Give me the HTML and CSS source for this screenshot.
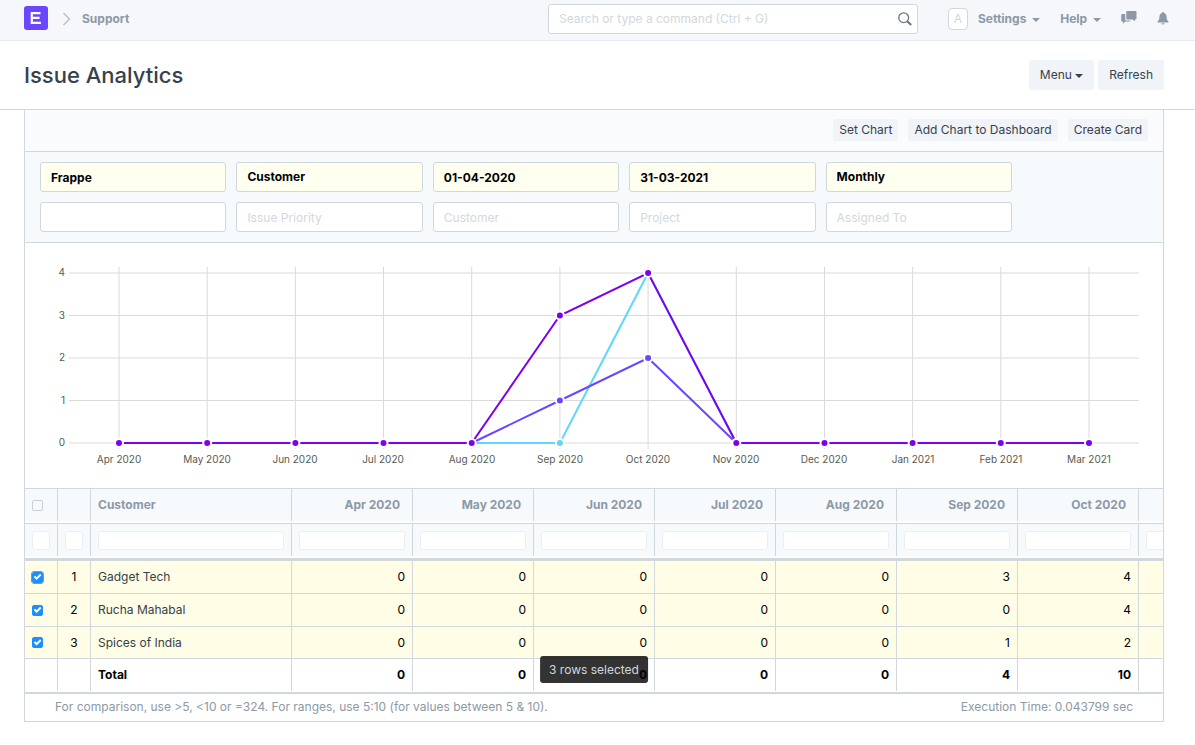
FILE: index.html
```html
<!DOCTYPE html>
<html lang="en">
<head>
<meta charset="utf-8">
<meta name="viewport" content="width=device-width, initial-scale=1">
<title>Issue Analytics</title>
<link rel="stylesheet" href="styles.css">
</head>
<body>
<header class="navbar">
  <a class="logo" href="#" aria-label="Home">
    <svg width="24" height="24" viewBox="0 0 24 24" aria-hidden="true"><rect width="24" height="24" rx="3" fill="#6b46ff"/><path d="M16.500 7.200H7.800V16.800H16.900M7.800 11.900H15.600" fill="none" stroke="#fff" stroke-width="2.200"/></svg>
  </a>
  <svg class="chevron" width="10" height="16" viewBox="0 0 10 16" aria-hidden="true"><path d="M1.500 2l6 6-6 6" fill="none" stroke="#b8c2cc" stroke-width="1.500"/></svg>
  <a class="crumb" href="#">Support</a>
  <div class="search">
    <input type="text" aria-label="Search" placeholder="Search or type a command (Ctrl + G)">
    <svg width="14" height="14" viewBox="0 0 14 14" aria-hidden="true"><circle cx="5.700" cy="5.700" r="4.900" fill="none" stroke="#6c7680" stroke-width="1.300"/><path d="M9.200 9.200l4 3.800" stroke="#6c7680" stroke-width="2"/></svg>
  </div>
  <nav class="nav">
    <a class="avatar" href="#">A</a>
    <button class="nav-link settings" type="button">Settings <span class="caret"></span></button>
    <button class="nav-link help" type="button">Help <span class="caret"></span></button>
    <button class="nav-icon" type="button" aria-label="Chat"><svg width="16" height="14" viewBox="0 0 16 14" aria-hidden="true"><path d="M6.300 0h8.200a1 1 0 0 1 1 1v6.500a1 1 0 0 1-1 1h-.7v2.100l-2.200-2.100H6.300a1 1 0 0 1-1-1V1a1 1 0 0 1 1-1z" fill="#8d99a6"/><path d="M4.300 3H1.200a1 1 0 0 0-1 1v5.500a1 1 0 0 0 1 1h.7v2.300l2.300-2.300h4.200a1 1 0 0 0 1-1H5.500a1.200 1.200 0 0 1-1.200-1.200z" fill="#8d99a6"/></svg></button>
    <button class="nav-icon bell" type="button" aria-label="Notifications"><svg width="12" height="13" viewBox="0 0 12 13" aria-hidden="true"><path d="M6 0a1 1 0 0 0-1 1C3.200 1.500 2.500 3 2.400 5 2.300 7.500 1.800 8.500.5 9.700V10.500h11v-.8C10.200 8.500 9.700 7.500 9.600 5 9.500 3 8.800 1.500 7 1a1 1 0 0 0-1-1zM4.500 11.200h3a1.500 1.200 0 0 1-3 0z" fill="#8d99a6"/></svg></button>
  </nav>
</header>

<div class="page-head">
  <h1>Issue Analytics</h1>
  <div class="actions">
    <button class="btn" type="button">Menu <span class="caret"></span></button>
    <button class="btn" type="button">Refresh</button>
  </div>
</div>

<main class="report">
  <div class="toolbar">
    <button class="btn-small" type="button">Set Chart</button>
    <button class="btn-small" type="button">Add Chart to Dashboard</button>
    <button class="btn-small" type="button">Create Card</button>
  </div>

  <form class="filters">
    <input class="field required" type="text" aria-label="Company" value="Frappe">
    <select class="field required" aria-label="Based On"><option>Customer</option></select>
    <input class="field required" type="text" aria-label="From Date" value="01-04-2020">
    <input class="field required" type="text" aria-label="To Date" value="31-03-2021">
    <select class="field required" aria-label="Range"><option>Monthly</option></select>
    <input class="field" type="text" aria-label="Status">
    <input class="field" type="text" aria-label="Issue Priority" placeholder="Issue Priority">
    <input class="field" type="text" aria-label="Customer" placeholder="Customer">
    <input class="field" type="text" aria-label="Project" placeholder="Project">
    <input class="field" type="text" aria-label="Assigned To" placeholder="Assigned To">
  </form>

  <svg class="chart" viewBox="0 0 1138 245" role="img" aria-label="Issues per month">
    <path class="grid" d="M44 30H1114M44 72.500H1114M44 115H1114M44 157.500H1114M44 200H1114M94 24V206M182.200 24V206M270.400 24V206M358.500 24V206M446.700 24V206M534.900 24V206M623.100 24V206M711.300 24V206M799.500 24V206M887.600 24V206M975.800 24V206M1064 24V206"/>
    <g class="y-labels">
      <text x="40" y="33">4</text><text x="40" y="76">3</text><text x="40" y="118">2</text><text x="40" y="161">1</text><text x="40" y="203">0</text>
    </g>
    <g class="x-labels">
      <text x="94" y="220">Apr 2020</text><text x="182" y="220">May 2020</text><text x="270" y="220">Jun 2020</text><text x="358" y="220">Jul 2020</text><text x="447" y="220">Aug 2020</text><text x="535" y="220">Sep 2020</text><text x="623" y="220">Oct 2020</text><text x="711" y="220">Nov 2020</text><text x="799" y="220">Dec 2020</text><text x="888" y="220">Jan 2021</text><text x="976" y="220">Feb 2021</text><text x="1064" y="220">Mar 2021</text>
    </g>
    <g class="lines">
      <path class="cyan" d="M446.700 200H534.900L623.100 30L711.300 200"/>
      <path class="indigo" d="M446.700 200L534.900 157.500L623.100 115L711.300 200"/>
      <path class="purple" d="M94 200H446.700L534.900 72.500L623.100 30L711.300 200H1064"/>
    </g>
    <g class="dots">
      <circle class="cyan" cx="534.900" cy="200" r="4"/>
      <circle class="indigo" cx="534.900" cy="157.500" r="4"/><circle class="indigo" cx="623.100" cy="115" r="4"/>
      <circle class="purple" cx="94" cy="200" r="4"/><circle class="purple" cx="182.200" cy="200" r="4"/><circle class="purple" cx="270.400" cy="200" r="4"/><circle class="purple" cx="358.500" cy="200" r="4"/><circle class="purple" cx="446.700" cy="200" r="4"/><circle class="purple" cx="534.900" cy="72.500" r="4"/><circle class="purple" cx="623.100" cy="30" r="4"/><circle class="purple" cx="711.300" cy="200" r="4"/><circle class="purple" cx="799.500" cy="200" r="4"/><circle class="purple" cx="887.600" cy="200" r="4"/><circle class="purple" cx="975.800" cy="200" r="4"/><circle class="purple" cx="1064" cy="200" r="4"/>
    </g>
  </svg>

  <div class="datatable">
    <table>
      <colgroup><col class="c-tick"><col class="c-tick"><col class="c-name"><col class="c-num"><col class="c-num"><col class="c-num"><col class="c-num"><col class="c-num"><col class="c-num"><col class="c-num"><col class="c-num"></colgroup>
      <thead>
        <tr class="titles"><th><input type="checkbox" aria-label="Select all rows"></th><th></th><th class="name">Customer</th><th>Apr 2020</th><th>May 2020</th><th>Jun 2020</th><th>Jul 2020</th><th>Aug 2020</th><th>Sep 2020</th><th>Oct 2020</th><th></th></tr>
        <tr class="gap"><td colspan="11"></td></tr>
        <tr class="search-row"><td><input type="text" aria-label="Filter selection"></td><td><input type="text" aria-label="Filter row number"></td><td><input type="text" aria-label="Filter Customer"></td><td><input type="text" aria-label="Filter Apr 2020"></td><td><input type="text" aria-label="Filter May 2020"></td><td><input type="text" aria-label="Filter Jun 2020"></td><td><input type="text" aria-label="Filter Jul 2020"></td><td><input type="text" aria-label="Filter Aug 2020"></td><td><input type="text" aria-label="Filter Sep 2020"></td><td><input type="text" aria-label="Filter Oct 2020"></td><td><input type="text" aria-label="Filter Nov 2020"></td></tr>
        <tr class="gap thick"><td colspan="11"></td></tr>
      </thead>
      <tbody>
        <tr><td><input class="focused" type="checkbox" checked aria-label="Select row 1"></td><td class="index">1</td><td class="name">Gadget Tech</td><td>0</td><td>0</td><td>0</td><td>0</td><td>0</td><td>3</td><td>4</td><td></td></tr>
        <tr><td><input type="checkbox" checked aria-label="Select row 2"></td><td class="index">2</td><td class="name">Rucha Mahabal</td><td>0</td><td>0</td><td>0</td><td>0</td><td>0</td><td>0</td><td>4</td><td></td></tr>
        <tr><td><input type="checkbox" checked aria-label="Select row 3"></td><td class="index">3</td><td class="name">Spices of India</td><td>0</td><td>0</td><td>0</td><td>0</td><td>0</td><td>1</td><td>2</td><td></td></tr>
      </tbody>
      <tfoot>
        <tr><td></td><td></td><td class="name">Total</td><td>0</td><td>0</td><td>0</td><td>0</td><td>0</td><td>4</td><td>10</td><td></td></tr>
        <tr class="end"><td colspan="11"></td></tr>
      </tfoot>
    </table>
    <div class="toast" role="status">3 rows selected</div>
  </div>

  <footer class="report-foot">
    <span>For comparison, use &gt;5, &lt;10 or =324. For ranges, use 5:10 (for values between 5 &amp; 10).</span>
    <span>Execution Time: 0.043799 sec</span>
  </footer>
</main>
</body>
</html>
```
FILE: styles.css
```css
* { box-sizing: border-box; }

body {
  margin: 0;
  background: #fff;
  color: #36414c;
  font: 12px/18px Inter, "Liberation Sans", sans-serif;
}

button, input, select { font: inherit; color: inherit; margin: 0; }
button { border: 0; cursor: pointer; }
a { text-decoration: none; color: inherit; }

.caret {
  display: inline-block;
  vertical-align: middle;
  border: 4px solid transparent;
  border-top-color: currentColor;
  border-bottom: 0;
}

/* Top bar */
.navbar {
  display: flex;
  align-items: center;
  padding: 4px 24px 6px;
  background: #f5f7fa;
  border-bottom: 1px solid #e6eaef;
  color: #8d99a6;
  font-weight: 700;
}
.logo { height: 24px; margin-bottom: 2px; }
.chevron { margin: 0 10px 0 14px; }
.search {
  display: flex;
  align-items: center;
  width: 370px;
  height: 30px;
  margin-left: auto;
  padding: 0 5px 0 10px;
  background: #fff;
  border: 1px solid #d1d8dd;
  border-radius: 3px;
}
.search input {
  flex: 1;
  min-width: 0;
  padding: 0;
  border: 0;
  outline: 0;
  background: none;
  color: #36414c;
  font-weight: 400;
}
::placeholder { color: #d1d8dd; opacity: 1; }
.nav { display: flex; align-items: center; margin-left: 30px; }
.avatar {
  width: 20px;
  height: 22px;
  border: 1px solid #d1d8dd;
  border-radius: 4px;
  background: #fff;
  color: #d1d8dd;
  font-weight: 400;
  line-height: 20px;
  text-align: center;
}
.nav-link { padding: 0; margin-left: 10px; background: none; font-weight: 700; }
.nav-link .caret { margin-left: 3px; }
.help { margin-left: 20px; }
.nav-icon { display: flex; padding: 0; margin: 0 0 2px 20px; background: none; }
.bell { margin-right: 2px; }

/* Page title */
.page-head {
  display: flex;
  align-items: center;
  justify-content: space-between;
  padding: 19px 31px 19px 24px;
  border-bottom: 1px solid #d1d8dd;
}
h1 { margin: 0; font-size: 22px; line-height: 30px; font-weight: 500; }
.actions { display: flex; gap: 4px; }
.btn {
  height: 30px;
  padding: 0 11px;
  border-radius: 3px;
  background: #f0f3f8;
}

/* Report frame */
.report {
  margin: 0 31px 0 24px;
  border: 1px solid #d1d8dd;
  border-top: 0;
}
.toolbar {
  display: flex;
  justify-content: flex-end;
  gap: 10px;
  padding: 9px 15px 10px;
  background: #fafbfd;
  border-bottom: 1px solid #d1d8dd;
}
.btn-small {
  height: 22px;
  padding: 0 6px;
  border-radius: 3px;
  background: #f0f3f8;
}
.filters {
  display: grid;
  grid-template-columns: repeat(5, 1fr);
  gap: 10px;
  padding: 10px 151px 10px 15px;
  background: #f6fafd;
  border-bottom: 1px solid #d1d8dd;
}
.field {
  width: 100%;
  min-width: 0;
  height: 30px;
  padding: 0 10px;
  appearance: none;
  border: 1px solid #d1d8dd;
  border-radius: 3px;
  background: #fff;
  outline: 0;
}
.required { background: #fffff0; color: #000; font-weight: 700; }

/* Line chart */
.chart { display: block; width: 100%; }
.chart text { fill: #555b51; font-size: 10px; }
.grid { fill: none; stroke: #dadada; }
.y-labels { text-anchor: end; }
.x-labels { text-anchor: middle; }
.lines { fill: none; stroke-width: 2; }
.lines .cyan { stroke: #5ed6ff; }
.lines .indigo { stroke: #6b46ff; }
.lines .purple { stroke: #7d00ee; }
.dots { stroke: #fff; stroke-width: 2; }
.dots .cyan { fill: #5ed6ff; }
.dots .indigo { fill: #6b46ff; }
.dots .purple { fill: #7d00ee; }

/* Data table */
.datatable { position: relative; overflow: hidden; border-top: 1px solid #d1d8dd; border-bottom: 2px solid #d1d8dd; }
table { width: 1235px; table-layout: fixed; border-collapse: separate; border-spacing: 0; }
.c-tick { width: 33px; }
.c-name { width: 201px; }
.c-num { width: 121px; }
th, td {
  height: 33px;
  padding: 0 7px;
  border-right: 1px solid #d1d8dd;
  text-align: right;
  color: #000;
}
thead th, .search-row td { height: 32px; background: #f6fafd; }
thead th { padding-right: 12px; color: #8d99a6; font-weight: 700; }
thead th:first-child { padding-right: 7px; }
th.name, td.name { text-align: left; }
.gap td { height: 3px; padding: 0; border-right: 0; border-bottom: 1px solid #d1d8dd; }
.gap.thick td { height: 5px; border-bottom-width: 3px; }
td.index { text-align: center; }
td:first-child, th:first-child { text-align: left; }
tbody td { background: #fffde5; border-bottom: 1px solid #d1d8dd; }
tbody tr:last-child td { height: 32px; }
tbody td.name { color: #36414c; }
tfoot td { height: 32px; font-weight: 700; }
tfoot .end td { height: 1px; padding: 0; border: 0; }

.search-row input {
  display: block;
  width: 100%;
  height: 19px;
  padding: 0 4px;
  border: 1px solid #ebeff2;
  border-radius: 3px;
  background: #fff;
}
input[type="checkbox"] {
  display: block;
  width: 11px;
  height: 11px;
  appearance: none;
  border: 1px solid #c8d0d7;
  border-radius: 2px;
}
input[type="checkbox"]:checked { border-color: #1b8fff; background: #1b8fff; }
input[type="checkbox"]:checked::after {
  content: "";
  display: block;
  width: 9px;
  height: 9px;
  background: #fff;
  clip-path: polygon(8% 50%, 24% 36%, 40% 52%, 78% 14%, 94% 30%, 40% 84%);
}
input.focused { outline: 1px solid #7c98b6; }

.toast {
  position: absolute;
  left: 50%;
  bottom: 9px;
  transform: translateX(-50%);
  padding: 5px 9px 4px;
  border-radius: 3px;
  background: rgba(0, 0, 0, 0.8);
  color: #d1d8dd;
  white-space: nowrap;
}

.report-foot {
  display: flex;
  justify-content: space-between;
  padding: 4px 30px 5px;
  color: #8d99a6;
}
```
